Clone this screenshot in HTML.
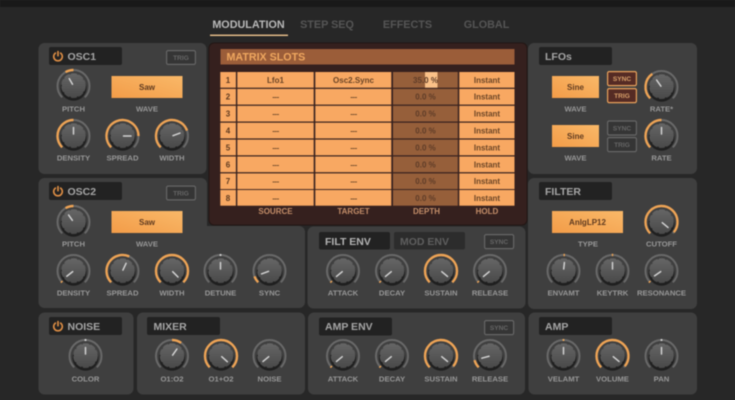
<!DOCTYPE html>
<html><head><meta charset="utf-8"><style>
html,body{margin:0;padding:0;background:#272727;width:735px;height:400px;overflow:hidden}
svg{display:block;filter:blur(.5px)}
text{font-family:"Liberation Sans",sans-serif;font-weight:700}
.p{fill:#3f3f3f}
.t{fill:#222222}
.tt{font-size:10.5px;fill:#a6a6a6}
.l{font-size:7.7px;fill:#979797;text-anchor:middle}
.o{fill:none;stroke:#eda355;stroke-width:2.4}
.i{stroke:#d2d2d2;stroke-width:1.5;stroke-linecap:round}
.b{font-size:8px;fill:#5e3a20;text-anchor:middle}
.c{font-size:8px;fill:#6b4526;text-anchor:middle}
.n{font-size:8px;fill:#7a5230;text-anchor:middle;letter-spacing:-.5px}
.d{font-size:8px;fill:#5e3c28;text-anchor:middle}
.h{font-size:8px;fill:#c48e69;text-anchor:middle}
.tb{fill:#353535;stroke:#666;stroke-width:1.2}
.tx{font-size:6.6px;fill:#666;text-anchor:middle}
.ab{fill:#552b24;stroke:#e9a25c;stroke-width:1.2}
.ax{font-size:6.6px;fill:#d8a06a;text-anchor:middle}
.tab{font-size:10.8px;fill:#555;text-anchor:middle}
.pw{fill:none;stroke:#e08f45;stroke-width:1.6;stroke-linecap:round}
</style></head><body>
<svg width="735" height="400" viewBox="0 0 735 400" xmlns="http://www.w3.org/2000/svg">
<defs>
<linearGradient id="bt" x1="0" y1="1" x2="1" y2="0"><stop offset="0" stop-color="#f39c48"/><stop offset="1" stop-color="#f9b868"/></linearGradient>
<linearGradient id="kb" x1="0" y1="0" x2="0" y2="1"><stop offset="0" stop-color="#656565"/><stop offset="1" stop-color="#4a4a4a"/></linearGradient>
<g id="k">
<path d="M-11.31 11.31A16 16 0 1 1 11.31 11.31" fill="none" stroke="#696969" stroke-width="2"/>
<circle cx="0" cy="1.8" r="13" fill="#1f1f1f"/>
<circle cx="0" cy="-.4" r="11.7" fill="url(#kb)"/>
<circle cx="0" cy="-.4" r="11.9" fill="none" stroke="url(#kb)" stroke-width="1" stroke-dasharray="6 1.6"/>
</g>
<g id="pw"><path class="pw" d="M-2.6 -3.4A4.3 4.3 0 1 0 2.6 -3.4"/><path class="pw" d="M0 -5V-.8"/></g>
<g id="row">
<rect x="220.3" width="15.6" height="15.7" fill="#f8a862"/>
<rect x="237.3" width="76.4" height="15.7" fill="#f8a862"/>
<rect x="315.3" width="76" height="15.7" fill="#f8a862"/>
<rect x="393" width="64.8" height="15.7" fill="#965f3a"/>
<rect x="459.3" width="55.2" height="15.7" fill="#f8a862"/>
</g>
</defs>

<rect width="735" height="400" fill="#272727"/>
<rect width="735" height="7" fill="#191919"/>

<!-- tabs -->
<text class="tab" x="248.5" y="28" style="fill:#b9b9b9">MODULATION</text>
<rect x="210" y="34.6" width="78" height="1.4" fill="#efc48e"/>
<text class="tab" x="327" y="28">STEP SEQ</text>
<text class="tab" x="407.5" y="28">EFFECTS</text>
<text class="tab" x="486.5" y="28">GLOBAL</text>

<!-- panels -->
<rect class="p" x="38.5" y="43" width="168" height="131" rx="6"/>
<path class="p" d="M44.5 178H201a6 6 0 0 1 6 6V226H299a6 6 0 0 1 6 6V302a6 6 0 0 1-6 6H44.5a6 6 0 0 1-6-6V184a6 6 0 0 1 6-6Z"/>
<rect class="p" x="528" y="43" width="169" height="131" rx="6"/>
<rect class="p" x="528" y="178" width="169" height="131" rx="6"/>
<rect class="p" x="307.5" y="226.5" width="218" height="82" rx="6"/>
<rect class="p" x="38.5" y="312.5" width="95" height="82" rx="6"/>
<rect class="p" x="137" y="312.5" width="168" height="82" rx="6"/>
<rect class="p" x="308" y="312.5" width="217" height="82" rx="6"/>
<rect class="p" x="528.5" y="312.5" width="168.5" height="82" rx="6"/>

<!-- matrix -->
<rect x="209" y="43" width="318" height="182" rx="5" fill="#35201e" stroke="#221614" stroke-width="1"/>
<rect x="220.5" y="49" width="294" height="15.5" fill="#9b5d39"/>
<text x="226.5" y="60.500" style="font-size:10.7px;fill:#efa75f">MATRIX SLOTS</text>
<use href="#row" y="72"/><use href="#row" y="88.9"/><use href="#row" y="105.8"/><use href="#row" y="122.7"/><use href="#row" y="139.6"/><use href="#row" y="156.5"/><use href="#row" y="173.4"/><use href="#row" y="190"/>
<rect x="425" y="72" width="12.5" height="15.7" fill="#fbc188"/>
<text class="b" x="228" y="82.8">1</text><text class="b" x="228" y="99.7">2</text><text class="b" x="228" y="116.6">3</text><text class="b" x="228" y="133.5">4</text><text class="b" x="228" y="150.4">5</text><text class="b" x="228" y="167.3">6</text><text class="b" x="228" y="184.2">7</text><text class="b" x="228" y="200.8">8</text>
<text class="c" x="275.5" y="82.8">Lfo1</text><text class="n" x="275.5" y="99.7">---</text><text class="n" x="275.5" y="116.6">---</text><text class="n" x="275.5" y="133.5">---</text><text class="n" x="275.5" y="150.4">---</text><text class="n" x="275.5" y="167.3">---</text><text class="n" x="275.5" y="184.2">---</text><text class="n" x="275.5" y="200.8">---</text>
<text class="c" x="353.5" y="82.8">Osc2.Sync</text><text class="n" x="353.5" y="99.7">---</text><text class="n" x="353.5" y="116.6">---</text><text class="n" x="353.5" y="133.5">---</text><text class="n" x="353.5" y="150.4">---</text><text class="n" x="353.5" y="167.3">---</text><text class="n" x="353.5" y="184.2">---</text><text class="n" x="353.5" y="200.8">---</text>
<text class="d" x="425.5" y="82.8">35.0 %</text><text class="d" x="425.5" y="99.7">0.0 %</text><text class="d" x="425.5" y="116.6">0.0 %</text><text class="d" x="425.5" y="133.5">0.0 %</text><text class="d" x="425.5" y="150.4">0.0 %</text><text class="d" x="425.5" y="167.3">0.0 %</text><text class="d" x="425.5" y="184.2">0.0 %</text><text class="d" x="425.5" y="200.8">0.0 %</text>
<text class="c" x="487" y="82.8">Instant</text><text class="c" x="487" y="99.7">Instant</text><text class="c" x="487" y="116.6">Instant</text><text class="c" x="487" y="133.5">Instant</text><text class="c" x="487" y="150.4">Instant</text><text class="c" x="487" y="167.3">Instant</text><text class="c" x="487" y="184.2">Instant</text><text class="c" x="487" y="200.8">Instant</text>
<text class="h" x="275.5" y="214">SOURCE</text><text class="h" x="353.5" y="214">TARGET</text><text class="h" x="426.5" y="214">DEPTH</text><text class="h" x="487" y="214">HOLD</text>

<!-- title boxes -->
<rect class="t" x="49" y="47" width="73" height="18" rx="2"/>
<use href="#pw" x="58" y="56.5"/><text class="tt" x="67.5" y="60">OSC1</text>
<rect class="t" x="49" y="182" width="73" height="18" rx="2"/>
<use href="#pw" x="58" y="191.5"/><text class="tt" x="67.5" y="195">OSC2</text>
<rect class="t" x="49" y="317" width="73" height="18" rx="2"/>
<use href="#pw" x="58" y="326.5"/><text class="tt" x="67.5" y="330">NOISE</text>
<rect class="t" x="147" y="317" width="73" height="18" rx="2"/><text class="tt" x="153.5" y="330">MIXER</text>
<rect class="t" x="319" y="232" width="71" height="17.5" rx="2"/><text class="tt" x="325" y="245" style="fill:#b4b4b4">FILT ENV</text>
<rect class="t" x="394" y="232" width="71" height="17.5" rx="2" style="fill:#2c2c2c"/><text class="tt" x="400" y="245" style="fill:#5f5f5f">MOD ENV</text>
<rect class="t" x="319" y="317.5" width="73" height="18" rx="2"/><text class="tt" x="325" y="330">AMP ENV</text>
<rect class="t" x="539" y="317" width="73" height="18" rx="2"/><text class="tt" x="545" y="330">AMP</text>
<rect class="t" x="539" y="47" width="73" height="18" rx="2"/><text class="tt" x="545" y="60">LFOs</text>
<rect class="t" x="539" y="182" width="73" height="18" rx="2"/><text class="tt" x="545" y="195">FILTER</text>

<!-- buttons -->
<rect x="111.5" y="76" width="71" height="22" fill="url(#bt)"/><text class="b" x="147" y="90">Saw</text>
<rect x="111.5" y="211" width="71" height="22" fill="url(#bt)"/><text class="b" x="147" y="225">Saw</text>
<rect x="552" y="76" width="47" height="22" fill="url(#bt)"/><text class="b" x="575.5" y="90">Sine</text>
<rect x="552" y="125" width="47" height="22" fill="url(#bt)"/><text class="b" x="575.5" y="139">Sine</text>
<rect x="552" y="211" width="71" height="22" fill="url(#bt)"/><text class="b" x="587.5" y="225">AnlgLP12</text>

<rect class="tb" x="166.6" y="50.6" width="28.8" height="13.8" rx="1.5"/><text class="tx" x="181" y="60">TRIG</text>
<rect class="tb" x="166.6" y="186.1" width="28.8" height="13.8" rx="1.5"/><text class="tx" x="181" y="195.5">TRIG</text>
<rect class="ab" x="607.6" y="71.6" width="28.8" height="14" rx="1.5"/><text class="ax" x="622" y="81">SYNC</text>
<rect class="ab" x="607.6" y="88.6" width="28.8" height="14" rx="1.5"/><text class="ax" x="622" y="98">TRIG</text>
<rect class="tb" x="607.6" y="121" width="28.8" height="14" rx="1.5"/><text class="tx" x="622" y="130.5">SYNC</text>
<rect class="tb" x="607.6" y="137.6" width="28.8" height="14" rx="1.5"/><text class="tx" x="622" y="147">TRIG</text>
<rect class="tb" x="484.6" y="234.6" width="29" height="14" rx="1.5"/><text class="tx" x="499" y="244">SYNC</text>
<rect class="tb" x="484.6" y="320.6" width="29" height="14" rx="1.5"/><text class="tx" x="499" y="330">SYNC</text>

<!-- knobs -->
<g transform="translate(73.5,86)"><use href="#k"/><path class="o" d="M-8 -13.86A16 16 0 0 1 0 -16"/><line class="i" transform="rotate(-30)" y1="-2" y2="-8.5"/></g>
<g transform="translate(73.5,136)"><use href="#k"/><path class="o" d="M-11.31 11.31A16 16 0 0 1 0 -16"/><line class="i" y1="-2" y2="-8.5"/></g>
<g transform="translate(122.5,136)"><use href="#k"/><path class="o" d="M-11.31 11.31A16 16 0 1 1 16 0"/><line class="i" transform="rotate(90)" y1="-1" y2="-8.5"/></g>
<g transform="translate(172,136)"><use href="#k"/><path class="o" d="M-11.31 11.31A16 16 0 1 1 15.04 -5.47"/><line class="i" transform="rotate(70)" y1="-1" y2="-8.5"/></g>

<g transform="translate(73.5,222)"><use href="#k"/><path class="o" d="M-8 -13.86A16 16 0 0 1 0 -16"/><line class="i" transform="rotate(-35)" y1="-2" y2="-8.5"/></g>
<g transform="translate(73.5,271)"><use href="#k"/><path class="o" d="M-11.31 11.31A16 16 0 0 1 -12.26 10.28"/><line class="i" transform="rotate(-128)" y1="-1" y2="-8.5"/></g>
<g transform="translate(122.5,271)"><use href="#k"/><path class="o" d="M-11.31 11.31A16 16 0 0 1 6.76 -14.5"/><line class="i" transform="rotate(25)" y1="-1" y2="-8.5"/></g>
<g transform="translate(172,271)"><use href="#k"/><path class="o" d="M-11.31 11.31A16 16 0 1 1 11.31 11.31"/><line class="i" transform="rotate(135)" y1="-1" y2="-8.5"/></g>
<g transform="translate(220.5,271)"><use href="#k"/><line class="i" y1="-2" y2="-8.5"/><circle cy="-16" r="1.1" fill="#cfcfcf"/></g>
<g transform="translate(269.5,271)"><use href="#k"/><path class="o" d="M-11.31 11.31A16 16 0 0 1 -15.04 5.47"/><line class="i" transform="rotate(-110)" y1="-1" y2="-8.5"/></g>

<g transform="translate(661.5,87)"><use href="#k"/><path class="o" d="M-11.31 11.31A16 16 0 0 1 -9.18 -13.11"/><line class="i" transform="rotate(-35)" y1="-1" y2="-8.5"/></g>
<g transform="translate(661.5,136)"><use href="#k"/><path class="o" d="M-11.31 11.31A16 16 0 0 1 0 -16"/><line class="i" y1="-2" y2="-8.5"/></g>

<g transform="translate(661.5,222)"><use href="#k"/><path class="o" d="M-11.31 11.31A16 16 0 1 1 12.26 10.28"/><line class="i" transform="rotate(130)" y1="-1" y2="-8.5"/></g>
<g transform="translate(563.5,271)"><use href="#k"/><path class="o" d="M0 -16A16 16 0 0 1 1.39 -15.94"/><line class="i" transform="rotate(6)" y1="-2" y2="-8.5"/></g>
<g transform="translate(612.5,271)"><use href="#k"/><path class="o" d="M-.7 -16A16 16 0 0 1 .7 -16"/><line class="i" y1="-2" y2="-8.5"/></g>
<g transform="translate(661.5,271)"><use href="#k"/><path class="o" d="M-11.31 11.31A16 16 0 0 1 -12.26 10.28"/><line class="i" transform="rotate(-125)" y1="-1" y2="-8.5"/></g>

<g transform="translate(343,271)"><use href="#k"/><path class="o" d="M-11.31 11.31A16 16 0 0 1 -12.26 10.28"/><line class="i" transform="rotate(-130)" y1="-1" y2="-8.5"/></g>
<g transform="translate(392,271)"><use href="#k"/><path class="o" d="M-11.31 11.31A16 16 0 0 1 -12.26 10.28"/><line class="i" transform="rotate(-130)" y1="-1" y2="-8.5"/></g>
<g transform="translate(441,271)"><use href="#k"/><path class="o" d="M-11.31 11.31A16 16 0 1 1 11.31 11.31"/><line class="i" transform="rotate(130)" y1="-1" y2="-8.5"/></g>
<g transform="translate(490,271)"><use href="#k"/><path class="o" d="M-11.31 11.31A16 16 0 0 1 -12.26 10.28"/><line class="i" transform="rotate(-130)" y1="-1" y2="-8.5"/></g>

<g transform="translate(85.5,356)"><use href="#k"/><line class="i" y1="-2" y2="-8.5"/><circle cy="-16" r="1.1" fill="#cfcfcf"/></g>
<g transform="translate(172,356)"><use href="#k"/><path class="o" d="M0 -16A16 16 0 0 1 9.18 -13.11"/><line class="i" transform="rotate(35)" y1="-1" y2="-8.5"/></g>
<g transform="translate(221,356)"><use href="#k"/><path class="o" d="M-11.31 11.31A16 16 0 1 1 11.31 11.31"/><line class="i" transform="rotate(132)" y1="-1" y2="-8.5"/></g>
<g transform="translate(269.5,356)"><use href="#k"/><line class="i" transform="rotate(-130)" y1="-1" y2="-8.5"/></g>

<g transform="translate(343,356)"><use href="#k"/><path class="o" d="M-11.31 11.31A16 16 0 0 1 -12.26 10.28"/><line class="i" transform="rotate(-130)" y1="-1" y2="-8.5"/></g>
<g transform="translate(392,356)"><use href="#k"/><path class="o" d="M-11.31 11.31A16 16 0 0 1 -12.26 10.28"/><line class="i" transform="rotate(-130)" y1="-1" y2="-8.5"/></g>
<g transform="translate(441,356)"><use href="#k"/><path class="o" d="M-11.31 11.31A16 16 0 1 1 12.26 10.28"/><line class="i" transform="rotate(130)" y1="-1" y2="-8.5"/></g>
<g transform="translate(490,356)"><use href="#k"/><path class="o" d="M-11.31 11.31A16 16 0 0 1 -15.45 4.14"/><line class="i" transform="rotate(-105)" y1="-1" y2="-8.5"/></g>

<g transform="translate(563.5,356)"><use href="#k"/><line class="i" y1="-2" y2="-8.5"/><circle cy="-16" r="1.1" fill="#e7a860"/></g>
<g transform="translate(612.5,356)"><use href="#k"/><path class="o" d="M-11.31 11.31A16 16 0 1 1 12.26 10.28"/><line class="i" transform="rotate(130)" y1="-1" y2="-8.5"/></g>
<g transform="translate(661.5,356)"><use href="#k"/><line class="i" y1="-2" y2="-8.5"/><circle cy="-16" r="1.1" fill="#cfcfcf"/></g>

<!-- labels -->
<text class="l" x="73.5" y="111.5">PITCH</text><text class="l" x="147" y="111.5">WAVE</text>
<text class="l" x="73.5" y="160.5">DENSITY</text><text class="l" x="122.5" y="160.5">SPREAD</text><text class="l" x="172" y="160.5">WIDTH</text>
<text class="l" x="73.5" y="246.5">PITCH</text><text class="l" x="147" y="246.5">WAVE</text>
<text class="l" x="73.5" y="295.5">DENSITY</text><text class="l" x="122.5" y="295.5">SPREAD</text><text class="l" x="172" y="295.5">WIDTH</text><text class="l" x="220.5" y="295.5">DETUNE</text><text class="l" x="269.5" y="295.5">SYNC</text>
<text class="l" x="575.5" y="111.5">WAVE</text><text class="l" x="661.5" y="111.5">RATE*</text>
<text class="l" x="575.5" y="160.5">WAVE</text><text class="l" x="661.5" y="160.5">RATE</text>
<text class="l" x="588" y="246.5">TYPE</text><text class="l" x="661.5" y="246.5">CUTOFF</text>
<text class="l" x="563.5" y="295.5">ENVAMT</text><text class="l" x="612.5" y="295.5">KEYTRK</text><text class="l" x="661.5" y="295.5">RESONANCE</text>
<text class="l" x="343" y="295.5">ATTACK</text><text class="l" x="392" y="295.5">DECAY</text><text class="l" x="441" y="295.5">SUSTAIN</text><text class="l" x="490" y="295.5">RELEASE</text>
<text class="l" x="85.5" y="381.5">COLOR</text>
<text class="l" x="172" y="381.5">O1:O2</text><text class="l" x="221" y="381.5">O1+O2</text><text class="l" x="269.5" y="381.5">NOISE</text>
<text class="l" x="343" y="381.5">ATTACK</text><text class="l" x="392" y="381.5">DECAY</text><text class="l" x="441" y="381.5">SUSTAIN</text><text class="l" x="490" y="381.5">RELEASE</text>
<text class="l" x="563.5" y="381.5">VELAMT</text><text class="l" x="612.5" y="381.5">VOLUME</text><text class="l" x="661.5" y="381.5">PAN</text>
</svg>
</body></html>
